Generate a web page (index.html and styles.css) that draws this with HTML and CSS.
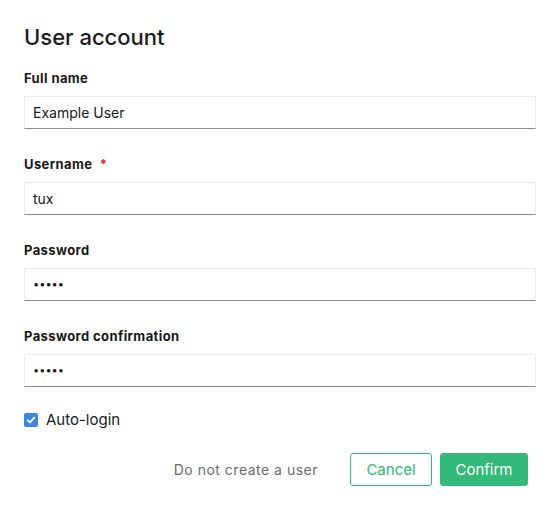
FILE: index.html
```html
<!DOCTYPE html>
<html>
<head>
<meta charset="utf-8">
<link rel="stylesheet" href="styles.css">
</head>
<body>
<div class="dialog">
  <h1 class="title">User account</h1>
  <div class="field">
    <label class="label">Full name</label>
    <div class="input">Example User</div>
  </div>
  <div class="field">
    <label class="label">Username <span class="req">*</span></label>
    <div class="input">tux</div>
  </div>
  <div class="field">
    <label class="label">Password</label>
    <div class="input dots">•••••</div>
  </div>
  <div class="field">
    <label class="label">Password confirmation</label>
    <div class="input dots">•••••</div>
  </div>
  <div class="check-row">
    <span class="checkbox"><svg width="10" height="10" viewBox="0 0 10 10"><path d="M1.6 5.2 L4 7.4 L8.4 2.6" fill="none" stroke="#fff" stroke-width="1.8" stroke-linecap="round" stroke-linejoin="round"/></svg></span>
    <span class="check-label">Auto-login</span>
  </div>
  <div class="actions">
    <span class="link">Do not create a user</span>
    <button class="btn btn-outline">Cancel</button>
    <button class="btn btn-primary">Confirm</button>
  </div>
</div>
</body>
</html>
```
FILE: styles.css
```css
html, body {
  margin: 0;
  background: #fff;
}
body {
  font-family: Inter, "Noto Sans", sans-serif;
  color: #1d1d1f;
}
.dialog {
  padding: 21px 23px 0 24px;
}
.title {
  margin: 0 0 16px;
  font-size: 22px;
  font-weight: 500;
  line-height: 32px;
  color: #1b1b1f;
}
.field {
  margin-bottom: 26px;
}
.label {
  display: block;
  font-size: 13px;
  font-weight: 700;
  line-height: 18px;
  letter-spacing: 0.4px;
  margin-bottom: 9px;
  color: #17171b;
}
.req {
  color: #d9302b;
  margin-left: 4px;
}
.input {
  box-sizing: border-box;
  height: 33px;
  border: 1px solid #ececec;
  border-bottom: 1px solid #8a8c8f;
  padding: 0 8px;
  font-size: 14px;
  line-height: 31px;
  color: #17171b;
  background: #fff;
}
.dots {
  font-size: 11px;
}
.check-row {
  display: flex;
  align-items: center;
  gap: 8px;
  height: 18px;
  margin-top: -2px;
}
.checkbox {
  width: 14px;
  height: 14px;
  border-radius: 2px;
  background: #3c85e0;
  display: flex;
  align-items: center;
  justify-content: center;
}
.check-label {
  font-size: 15px;
  line-height: 18px;
  color: #202024;
}
.actions {
  display: flex;
  align-items: center;
  justify-content: flex-end;
  gap: 8px;
  margin-top: 24px;
  padding-right: 8px;
}
.link {
  font-size: 14px;
  letter-spacing: 0.5px;
  color: #6b6b70;
  margin-right: 24px;
}
.btn {
  font-family: inherit;
  font-size: 15px;
  height: 33px;
  border-radius: 3px;
  padding: 0 14px;
  cursor: pointer;
}
.btn-outline {
  background: #fff;
  border: 1px solid #33b978;
  color: #33b978;
  width: 82px;
}
.btn-primary {
  background: #33b978;
  border: 1px solid #33b978;
  color: #fff;
  width: 88px;
}
```
